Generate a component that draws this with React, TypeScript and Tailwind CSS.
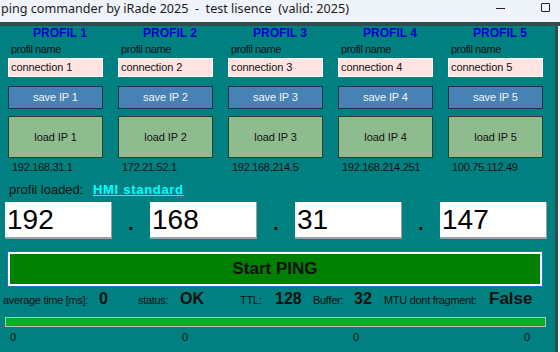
import React from "react";

const cols = [
  { n: 1, name: "connection 1", ip: "192.168.31.1" },
  { n: 2, name: "connection 2", ip: "172.21.52.1" },
  { n: 3, name: "connection 3", ip: "192.168.214.5" },
  { n: 4, name: "connection 4", ip: "192.168.214.251" },
  { n: 5, name: "connection 5", ip: "100.75.112.49" },
];

const octets = ["192", "168", "31", "147"];

export default function App() {
  return (
    <div
      className="w-[560px] h-[352px] overflow-hidden bg-[#eff3fa] flex flex-col"
      style={{ fontFamily: '"Liberation Sans", Arial, sans-serif' }}
    >
      {/* title bar */}
      <div className="h-[22px] flex items-start shrink-0">
        <span
          className="pl-[1px] pt-[1px] whitespace-pre text-[12.6px] leading-[16px] text-[#1b1b1b]"
          style={{ fontFamily: '"Noto Sans", sans-serif' }}
        >
          ping commander by iRade 2025  -  test lisence  (valid: 2025)
        </span>
        <div className="ml-auto flex items-start pr-[10px]">
          <div className="mt-[8px] w-[9px] h-[1px] bg-[#222]" />
          <div className="ml-[36px] mt-[3px] w-[9px] h-[9px] border border-[#222] rounded-[1px]" />
        </div>
      </div>
      <div className="h-[4px] bg-[#2f4f4f] shrink-0" />
      <div className="flex flex-1">
        <div className="w-[555px] bg-[#008080] flex flex-col text-[#111]">
          {/* profiles */}
          <div className="flex pl-[8px] gap-[15px]">
            {cols.map((c) => (
              <div key={c.n} className="w-[95px] flex flex-col">
                <div className="h-[14px] leading-[14px] text-[12px] font-bold text-[#0000cd] text-center pl-[9px] whitespace-nowrap">
                  PROFIL {c.n}
                </div>
                <div className="mt-[3px] h-[13px] leading-[13px] pl-[3px] text-[11px] tracking-[-0.4px] whitespace-nowrap">
                  profil name
                </div>
                <div className="mt-[2px] h-[19px] bg-[#ffe4e1] border border-white flex items-center pl-[2px] text-[11px] tracking-[-0.1px] text-[#111]">
                  {c.name}
                </div>
                <div className="mt-[9px] h-[23px] bg-[#4682b4] border border-[#1d3246] flex items-center justify-center text-[11px] tracking-[-0.1px] text-[#f4f4f4]">
                  save IP {c.n}
                </div>
                <div className="mt-[7px] h-[42px] bg-[#8fbc8f] border border-[#2e3e2e] flex items-center justify-center text-[11px] tracking-[-0.1px] text-[#111]">
                  load IP {c.n}
                </div>
                <div className="mt-[3px] h-[13px] leading-[13px] pl-[4px] text-[11px] tracking-[-0.3px] whitespace-nowrap">
                  {c.ip}
                </div>
              </div>
            ))}
          </div>

          {/* profil loaded */}
          <div className="mt-[8px] h-[16px] leading-[16px] flex items-baseline pl-[9px]">
            <span className="w-[84px] text-[13px] whitespace-nowrap">profil loaded:</span>
            <span className="text-[13px] font-bold underline text-[#00ffff] tracking-[0.7px] whitespace-nowrap">
              HMI standard
            </span>
          </div>

          {/* octets */}
          <div className="mt-[4px] flex pl-[5px] items-center">
            {octets.map((o, i) => (
              <React.Fragment key={i}>
                <div className="w-[107px] h-[37px] bg-white border-r border-b-2 border-[#a0a0a0] flex items-center pl-[2px] text-[28px] text-black">
                  {o}
                </div>
                {i < 3 && (
                  <div className="w-[38px] h-[37px] flex items-center justify-center text-[28px] text-black">
                    .
                  </div>
                )}
              </React.Fragment>
            ))}
          </div>

          {/* start ping */}
          <div className="mt-[12px] ml-[7px] w-[536px] h-[36px] border border-[#1e74d6] rounded-[1px]">
            <div className="w-full h-full border-2 border-white bg-[#008000] flex items-center justify-center text-[17px] font-bold text-[#111]">
              Start PING
            </div>
          </div>

          {/* status row */}
          <div className="mt-[4px] h-[20px] flex items-baseline pl-[3px] whitespace-nowrap">
            <span className="w-[96px] text-[11px] leading-[16px] tracking-[-0.3px]">average time [ms]:</span>
            <span className="w-[39px] text-[16px] leading-[16px] font-bold">0</span>
            <span className="w-[42px] text-[11px] leading-[16px] tracking-[-0.3px]">status:</span>
            <span className="w-[60px] text-[16px] leading-[16px] font-bold">OK</span>
            <span className="w-[35px] text-[11px] leading-[16px] tracking-[-0.3px]">TTL:</span>
            <span className="w-[38px] text-[16px] leading-[16px] font-bold">128</span>
            <span className="w-[41px] text-[11px] leading-[16px] tracking-[-0.3px]">Buffer:</span>
            <span className="w-[30px] text-[16px] leading-[16px] font-bold">32</span>
            <span className="w-[105px] text-[11px] leading-[16px] tracking-[-0.3px]">MTU dont fragment:</span>
            <span className="text-[17px] leading-[16px] font-bold">False</span>
          </div>

          {/* progress */}
          <div className="mt-[6px] ml-[5px] w-[541px] h-[10px] border border-[#bdbdbd] bg-[#06b025]" />

          {/* bottom zeros */}
          <div className="mt-[4px] h-[13px] leading-[13px] flex pl-[10px] text-[11px]">
            <span className="w-[172px]">0</span>
            <span className="w-[171px]">0</span>
            <span className="w-[171px]">0</span>
            <span>0</span>
          </div>
        </div>
        <div className="w-[3px] bg-[#2f4f4f]" />
        <div className="flex-1 bg-[#eff3fa]" />
      </div>
    </div>
  );
}
